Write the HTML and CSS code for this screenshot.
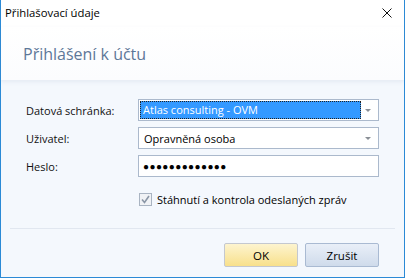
FILE: index.html
```html
<!DOCTYPE html>
<html lang="cs">
<head>
    <meta charset="UTF-8">
    <title>Přihlašovací údaje</title>
    <link rel="stylesheet" href="styles.css">
</head>
<body>

    <div class="window">

        <!-- Title bar -->
        <div class="titlebar">
            <span class="caption">Přihlašovací údaje</span>
            <span class="close">
                <svg width="10" height="10" viewBox="0 0 10 10">
                    <path d="M0.5 0.5 L9.5 9.5 M9.5 0.5 L0.5 9.5" stroke="#111" stroke-width="1"/>
                </svg>
            </span>
        </div>

        <!-- Header -->
        <div class="header">
            <h2>Přihlášení k účtu</h2>
        </div>

        <!-- Form -->
        <div class="content">
            <div class="row">
                <label>Datová schránka:</label>
                <div class="combo">
                    <span class="selected">Atlas consulting - OVM</span>
                    <span class="arrow"></span>
                </div>
            </div>
            <div class="row">
                <label>Uživatel:</label>
                <div class="combo">
                    <span class="value">Opravněná osoba</span>
                    <span class="arrow"></span>
                </div>
            </div>
            <div class="row row-password">
                <label>Heslo:</label>
                <div class="textbox">
                    <span class="dots">●●●●●●●●●●●●●</span>
                </div>
            </div>
            <div class="check-row">
                <span class="checkbox">
                    <svg width="9" height="9" viewBox="0 0 9 9">
                        <path d="M1 4.5 L3.5 7.5 L8 1" fill="none" stroke="#8a96a6" stroke-width="1.6"/>
                    </svg>
                </span>
                <span>Stáhnutí a kontrola odeslaných zpráv</span>
            </div>
        </div>

        <!-- Buttons -->
        <div class="footer">
            <button class="btn btn-ok">OK</button>
            <button class="btn btn-cancel">Zrušit</button>
        </div>

    </div>

</body>
</html>
```

FILE: styles.css
```css
* {
    box-sizing: border-box;
}

body {
    margin: 0;
    font-family: "Open Sans", "Noto Sans", sans-serif;
    font-size: 11px;
    color: #000;
    background: #fff;
}

.window {
    width: 405px;
    height: 278px;
    border: 1px solid #2b8ad6;
    border-top: none;
    display: flex;
    flex-direction: column;
    background: #f4f8fd;
}

.titlebar {
    height: 27px;
    background: #fff;
    display: flex;
    align-items: center;
    justify-content: space-between;
    padding: 0 12px 2px 4px;
}

.caption {
    font-size: 11.3px;
}

.close {
    display: flex;
}

.header {
    height: 53px;
    background: linear-gradient(#ffffff, #fbfcfe);
    box-shadow: 0 2px 4px rgba(120, 140, 170, 0.12);
    display: flex;
    align-items: center;
    padding-left: 22px;
}

.header h2 {
    margin: 0;
    font-size: 16px;
    font-weight: normal;
    color: #5d7798;
}

.content {
    padding: 19px 0 0 25px;
    flex: 1;
}

.row {
    display: flex;
    align-items: center;
    margin-bottom: 6px;
}

.row label {
    width: 112px;
    color: #111;
}

.row-password {
    margin-top: 5px;
}

.combo,
.textbox {
    width: 241px;
    height: 22px;
    border: 1px solid #abb9cc;
    background: #fff;
    display: flex;
    align-items: center;
    padding: 0 1px;
}

.selected {
    flex: 1;
    height: 18px;
    background: #3399ff;
    color: #fff;
    outline: 1px dotted #222;
    outline-offset: -1px;
    padding-left: 3px;
    line-height: 17px;
    margin-right: 4px;
}

.value {
    flex: 1;
    padding-left: 4px;
}

.arrow {
    width: 0;
    height: 0;
    border-left: 3px solid transparent;
    border-right: 3px solid transparent;
    border-top: 3px solid #8a8f96;
    margin-right: 6px;
}

.dots {
    padding-left: 3px;
    font-size: 10px;
    letter-spacing: 0.4px;
}

.check-row {
    display: flex;
    align-items: center;
    margin: 15px 0 0 113px;
}

.checkbox {
    width: 13px;
    height: 13px;
    border: 1px solid #a9b4c2;
    background: #f0f2f5;
    display: flex;
    align-items: center;
    justify-content: center;
    margin-right: 5px;
}

.footer {
    margin: 0 9px;
    border-top: 1px solid #e1e7f0;
    height: 49px;
    display: flex;
    justify-content: flex-end;
    align-items: flex-start;
    padding: 14px 16px 0 0;
    gap: 7px;
}

.btn {
    width: 74px;
    height: 24px;
    font-family: inherit;
    font-size: 11.5px;
    color: #000;
    border-radius: 2px;
    cursor: pointer;
}

.btn-ok {
    background: linear-gradient(#fdf4cf, #f8e08b);
    border: 1px solid #c4c8cf;
}

.btn-cancel {
    background: linear-gradient(#e9eff8, #cfdbeb);
    border: 1px solid #a9bad2;
}
```
